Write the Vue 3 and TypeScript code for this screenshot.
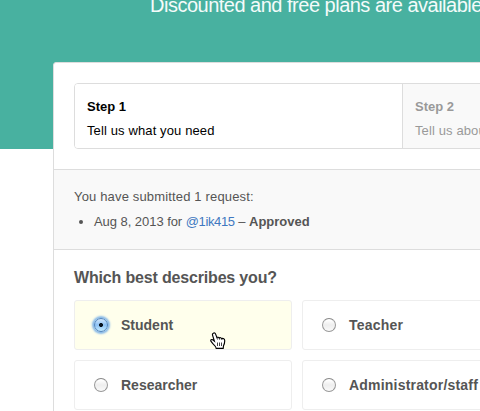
<script setup lang="ts">
interface Step { title: string; text: string; active: boolean }
interface Role { label: string; selected: boolean }

const steps: Step[] = [
  { title: 'Step 1', text: 'Tell us what you need', active: true },
  { title: 'Step 2', text: 'Tell us about yourself', active: false },
]
const roles: Role[] = [
  { label: 'Student', selected: true },
  { label: 'Teacher', selected: false },
  { label: 'Researcher', selected: false },
  { label: 'Administrator/staff', selected: false },
]
</script>

<template>
  <div class="page">
    <header class="hero"><p class="tagline">Discounted and free plans are available</p></header>
    <main class="card">
      <section class="steps-wrap">
        <ol class="steps">
          <li v-for="s in steps" :key="s.title" class="step" :class="{ active: s.active }">
            <strong class="step-title">{{ s.title }}</strong>
            <span class="step-text">{{ s.text }}</span>
          </li>
        </ol>
      </section>
      <section class="requests">
        <p class="summary">You have submitted 1 request:</p>
        <div class="request">
          <i class="bullet"></i>
          <span class="entry">Aug 8, 2013 for <a class="link">@1ik415</a> – <strong class="status">Approved</strong></span>
        </div>
      </section>
      <section class="question">
        <h2 class="heading">Which best describes you?</h2>
        <div class="roles">
          <label v-for="r in roles" :key="r.label" class="role" :class="{ selected: r.selected }">
            <i class="radio"></i>
            <span class="role-label">{{ r.label }}</span>
            <svg v-if="r.selected" class="cursor" width="16" height="18" viewBox="0 0 16 18">
              <path d="M3.300 1.200C4.300.6 5.200 1.100 5.600 2.100L6.900 5.500C7.700 5 8.700 5.200 9.200 6C10.100 5.400 11.200 5.700 11.700 6.600C13.200 6 14.700 6.900 14.700 8.500C14.800 10.500 14.300 12.200 13.500 13.800L13.200 16.400H6.200C5.900 14.900 4.600 13.400 3.300 12.200C2.300 11.100 1.600 10 .9 9.200C.4 8 1.500 7 2.700 7.800L4.400 9.200L2.600 3.300C2.300 2.400 2.500 1.600 3.300 1.200Z" fill="#fff" stroke="#000" stroke-width="1.150" />
              <path d="M6.900 5.500L7.500 7.500M9.200 6L9.700 7.700M11.700 6.600L12 8M7.500 10.500V14M9.500 10.500V14M11.500 10.500V14" fill="none" stroke="#111" stroke-width=".8" />
            </svg>
          </label>
        </div>
      </section>
    </main>
  </div>
</template>

<style>
body { margin: 0; overflow: hidden; background: #fff; }
</style>

<style scoped>
.page {
  width: 480px; height: 411px; overflow: hidden; box-sizing: border-box;
  background: linear-gradient(#48b1a0 149px, #fff 149px);
  font-family: "Liberation Sans", Arial, sans-serif; font-size: 13px; color: #555;
}
p, h2, ol { margin: 0; padding: 0; }
.hero { height: 62px; overflow: hidden; }
.tagline {
  margin: -7px 0 0 150px; font-size: 20px; line-height: 24px; letter-spacing: -0.5px;
  color: #f4fbfa; white-space: nowrap;
}
.card {
  width: 700px; height: 420px; margin-left: 53px; box-sizing: border-box;
  background: #fff; border: 1px solid #ddd; border-radius: 3px;
}
.steps-wrap { padding: 20px; height: 106px; box-sizing: border-box; }
.steps {
  display: flex; list-style: none; height: 66px; box-sizing: border-box;
  border: 1px solid #ddd; border-radius: 4px; overflow: hidden;
}
.step {
  flex: 1 0 328px; box-sizing: border-box; padding: 13px 12px;
  background: #f9f9f9; color: #999; border-left: 1px solid #ddd;
  display: flex; flex-direction: column; line-height: 20px; gap: 4px;
}
.step.active { flex: 0 0 327px; background: #fff; color: #000; border-left: 0; }
.step-title, .step-text { white-space: nowrap; line-height: 20px; }
.step-text { letter-spacing: 0.12px; }
.requests {
  height: 81px; box-sizing: border-box; padding: 17px 20px 0;
  background: #f9f9f9; border: solid #ddd; border-width: 1px 0;
}
.summary { line-height: 20px; letter-spacing: 0.16px; }
.request { display: flex; align-items: center; margin-top: 5px; line-height: 20px; }
.bullet { width: 4px; height: 4px; border-radius: 50%; background: #555; margin: 0 11px 0 5px; }
.entry { letter-spacing: -0.05px; }
.link { color: #4078c0; letter-spacing: -0.36px; }
.status { letter-spacing: 0; }
.question { padding: 17px 20px; }
.heading { font-size: 16px; line-height: 22px; font-weight: bold; letter-spacing: -0.17px; }
.roles { display: grid; grid-template-columns: 218px 218px; gap: 10px; margin-top: 11px; }
.role {
  display: flex; align-items: center; height: 50px; box-sizing: border-box;
  padding-left: 19px; border: 1px solid #eee; border-radius: 3px; position: relative;
  font-size: 14px; font-weight: bold; white-space: nowrap;
}
.role:nth-child(even) .role-label { letter-spacing: 0.2px; }
.role.selected { background: #ffffec; }
.radio {
  width: 14px; height: 14px; box-sizing: border-box; margin-right: 13px;
  border: 1px solid #999; border-top-color: #888; border-radius: 50%;
  background: linear-gradient(#fff 10%, #eee 50%, #fafafa);
}
.selected .radio {
  border-color: #4d83bf; box-shadow: 0 0 2px 2px #86b8e8;
  background: radial-gradient(circle, #08131f 0 1.7px, transparent 2.3px), linear-gradient(#d3e7fb, #8dc2f4 50%, #c3ebff);
}
.cursor { position: absolute; left: 135px; top: 31px; }
</style>
